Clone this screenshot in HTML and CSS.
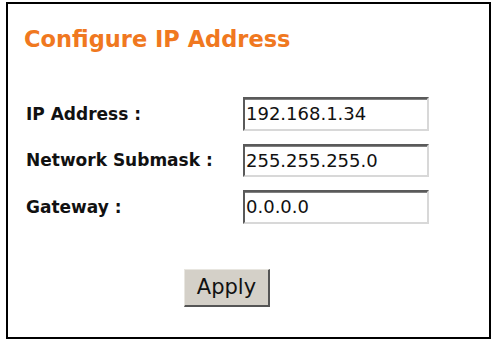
FILE: index.html
```html
<!DOCTYPE html>
<html>
<head>
<meta charset="utf-8">
<link rel="stylesheet" href="styles.css">
</head>
<body>
<div class="frame">
  <h1 class="title">Configure IP Address</h1>
  <div class="form">
    <label class="label">IP Address :</label>
    <input class="field" type="text" value="192.168.1.34" readonly>
    <label class="label">Network Submask :</label>
    <input class="field" type="text" value="255.255.255.0" readonly>
    <label class="label">Gateway :</label>
    <input class="field" type="text" value="0.0.0.0" readonly>
  </div>
  <div class="actions">
    <button class="apply" type="button">Apply</button>
  </div>
</div>
</body>
</html>
```

FILE: styles.css
```css
html, body {
  margin: 0;
  padding: 0;
  background: #ffffff;
}
body {
  font-family: "DejaVu Sans", "Liberation Sans", sans-serif;
  color: #111111;
}
.frame {
  box-sizing: border-box;
  margin: 2px 0 0 6px;
  width: 485px;
  height: 337px;
  border: 2px solid #000000;
  background: #ffffff;
}
.title {
  margin: 23px 0 0 16px;
  font-size: 22.5px;
  line-height: 25px;
  font-weight: bold;
  color: #f07820;
}
.form {
  margin: 45px 0 0 18px;
  display: grid;
  grid-template-columns: 217px 186px;
  grid-auto-rows: 33.5px;
  row-gap: 13px;
  align-items: center;
}
.label {
  font-size: 17px;
  font-weight: bold;
  color: #111111;
}
.field {
  box-sizing: border-box;
  width: 186px;
  height: 33.5px;
  margin: 0;
  padding: 0 0 0 1px;
  font-family: "DejaVu Sans", sans-serif;
  font-size: 18px;
  color: #111111;
  background: #ffffff;
  border-style: solid;
  border-width: 2px 2px 2px 2px;
  border-color: #5a5a5a #d8d8d8 #d8d8d8 #5a5a5a;
  box-shadow: inset 0 1px 0 #808080;
  outline: none;
}
.actions {
  margin: 45px 0 0 176px;
  display: flex;
}
.apply {
  box-sizing: border-box;
  width: 86px;
  height: 38px;
  padding: 0;
  margin: 0;
  font-family: "DejaVu Sans", sans-serif;
  font-size: 21px;
  color: #111111;
  background: #d4d0c8;
  border-style: solid;
  border-width: 1px 2px 2px 1px;
  border-color: #e8e6e0 #555555 #555555 #e8e6e0;
}
```
